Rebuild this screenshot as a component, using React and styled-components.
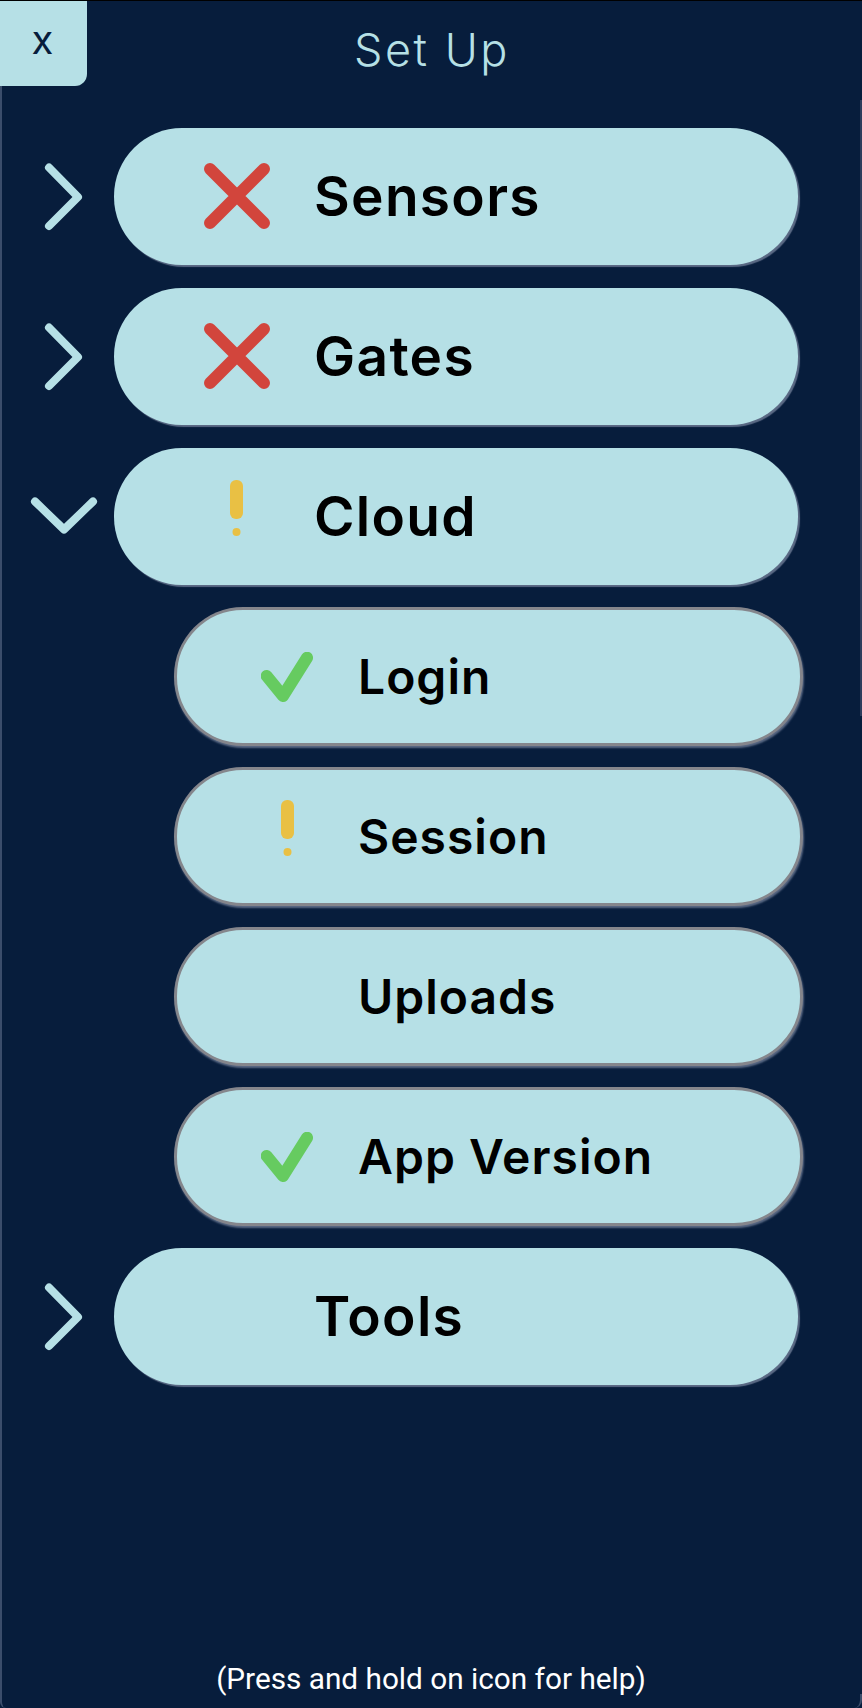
import React from "react";
import styled, { createGlobalStyle } from "styled-components";

const GlobalStyle = createGlobalStyle`
  html, body {
    margin: 0;
    padding: 0;
    background: #071d3c;
  }
`;

const Screen = styled.div`
  width: 862px;
  height: 1708px;
  box-sizing: border-box;
  background: #071d3c;
  border-top: 1px solid #000;
  display: flex;
  flex-direction: column;
  position: relative;
  overflow: hidden;
`;

const LeftEdge = styled.div`
  position: absolute;
  left: 0;
  top: 85px;
  bottom: 0;
  width: 6px;
  box-sizing: border-box;
  border-left: 2px solid #3b4d6b;
  border-bottom-left-radius: 6px;
`;

const RightEdge = styled.div`
  position: absolute;
  right: 0;
  top: 99px;
  width: 2px;
  height: 616px;
  background: #2d3c5c;
`;

const RightCorner = styled.div`
  position: absolute;
  right: 0;
  bottom: 0;
  width: 8px;
  height: 14px;
  box-sizing: border-box;
  border-right: 2px solid #3b4d6b;
  border-bottom-right-radius: 8px;
`;

const Header = styled.header`
  height: 127px;
  flex: none;
  position: relative;
  display: flex;
  justify-content: center;
`;

const CloseButton = styled.button`
  position: absolute;
  left: 0;
  top: 0;
  width: 87px;
  height: 85px;
  padding: 0 2px 8px 0;
  border: none;
  border-radius: 0 0 12px 0;
  background: #b6e0e6;
  color: #071d3c;
  font: 400 40px "Inter", sans-serif;
`;

const Title = styled.h1`
  margin: 21px 0 0 2px;
  color: #b6e0e6;
  font: 300 45px/56px "Inter", sans-serif;
  letter-spacing: 2.5px;
`;

const List = styled.div`
  display: flex;
  flex-direction: column;
  gap: 23px;
`;

const Row = styled.div`
  display: flex;
  height: 137px;
  padding-left: ${(p) => (p.$sub ? "175px" : "0")};
`;

const ToggleSlot = styled.div`
  width: 114px;
  flex: none;
  box-sizing: border-box;
  padding-left: 14px;
  display: flex;
  justify-content: center;
  align-items: center;
`;

const ToggleIcon = styled.svg`
  fill: none;
  stroke: #b6e0e6;
  stroke-width: 8;
  stroke-linecap: round;
  stroke-linejoin: round;
`;

const Pill = styled.div`
  box-sizing: border-box;
  width: ${(p) => (p.$sub ? "627px" : "684px")};
  height: 137px;
  border-radius: 68px;
  background: #b6e0e6;
  display: flex;
  align-items: center;
  padding-left: ${(p) => (p.$sub ? "39px" : "45px")};
  ${(p) =>
    p.$sub
      ? "border: 2px solid #85868c; box-shadow: 0 0 0 1px #85868c, 1px 2px 2px 1px #5b6a85;"
      : "box-shadow: 2px 2px 1px #5b6a85;"}
`;

const StatusSlot = styled.div`
  width: ${(p) => (p.$sub ? "142px" : "155px")};
  flex: none;
  display: flex;
  align-items: center;
  justify-content: center;
  height: 100%;
`;

const Label = styled.span`
  color: #000;
  font-family: "Inter", sans-serif;
  font-weight: 600;
  font-size: ${(p) => (p.$sub ? "48px" : "55px")};
  letter-spacing: ${(p) => (p.$sub ? "1px" : "1.3px")};
  white-space: nowrap;
  margin-top: -1px;
`;

const HelpText = styled.div`
  margin-top: auto;
  height: 49px;
  color: #fff;
  text-align: center;
  font: 400 29.75px/40px "Roboto", sans-serif;
`;

const CrossGlyph = styled.svg`
  margin-bottom: 2px;
`;

function CrossIcon() {
  return (
    <CrossGlyph width="66" height="66" viewBox="0 0 66 66" fill="none">
      <path d="M6 6 L60 60 M60 6 L6 60" stroke="#d2453c" strokeWidth="12" strokeLinecap="round" />
    </CrossGlyph>
  );
}

function CheckIcon() {
  return (
    <svg width="52" height="50" viewBox="0 0 52 50" fill="none">
      <path d="M5.7 24 L22 44 L46 5.7" stroke="#66cb60" strokeWidth="12" strokeLinecap="round" strokeLinejoin="round" />
    </svg>
  );
}

const WarnGlyph = styled.svg`
  fill: #e9c044;
  margin-bottom: 18px;
`;

function WarnIcon() {
  return (
    <WarnGlyph width="13" height="56" viewBox="0 0 13 56">
      <rect x="0" y="0" width="13" height="39" rx="6" />
      <circle cx="6.5" cy="52" r="4" />
    </WarnGlyph>
  );
}

const statusIcons = { cross: CrossIcon, check: CheckIcon, warn: WarnIcon };

const togglePaths = {
  closed: "M23 8.5 L52 38 L23 67",
  open: "M9 22.5 L38 50.5 L67 22.5",
};

const rows = [
  { label: "Sensors", status: "cross", toggle: "closed" },
  { label: "Gates", status: "cross", toggle: "closed" },
  { label: "Cloud", status: "warn", toggle: "open" },
  { label: "Login", status: "check", sub: true },
  { label: "Session", status: "warn", sub: true },
  { label: "Uploads", sub: true },
  { label: "App Version", status: "check", sub: true },
  { label: "Tools", toggle: "closed" },
];

function App() {
  return (
    <>
      <GlobalStyle />
      <Screen>
        <LeftEdge />
        <RightEdge />
        <RightCorner />
        <Header>
          <CloseButton>x</CloseButton>
          <Title>Set Up</Title>
        </Header>
        <List>
          {rows.map((row) => {
            const Icon = statusIcons[row.status];
            return (
              <Row key={row.label} $sub={row.sub}>
                {!row.sub && (
                  <ToggleSlot>
                    <ToggleIcon width="76" height="76" viewBox="0 0 76 76">
                      <path d={togglePaths[row.toggle]} />
                    </ToggleIcon>
                  </ToggleSlot>
                )}
                <Pill $sub={row.sub}>
                  <StatusSlot $sub={row.sub}>{Icon && <Icon />}</StatusSlot>
                  <Label $sub={row.sub}>{row.label}</Label>
                </Pill>
              </Row>
            );
          })}
        </List>
        <HelpText>(Press and hold on icon for help)</HelpText>
      </Screen>
    </>
  );
}

export default App;
